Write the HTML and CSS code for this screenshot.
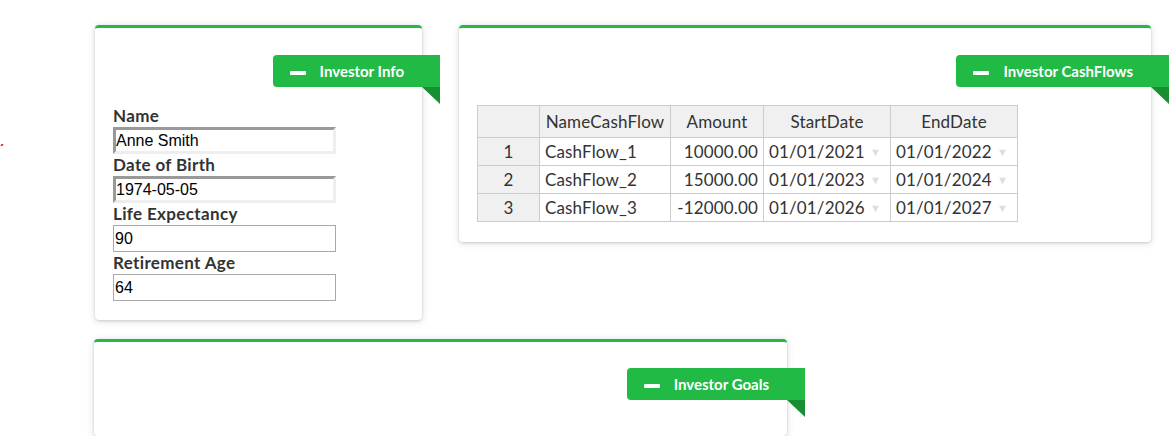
FILE: index.html
```html
<!DOCTYPE html>
<html>
<head>
<meta charset="utf-8">
<link rel="stylesheet" href="styles.css">
</head>
<body>
<span class="stray"></span>
<div class="page">
  <div class="top-row">
    <section class="card card-info">
      <div class="ribbon-row"><div class="ribbon"><span class="minus"></span><span class="ribbon-text">Investor Info</span></div></div>
      <form class="form">
        <label class="lbl">Name</label>
        <input class="inp inset" type="text" value="Anne Smith">
        <label class="lbl">Date of Birth</label>
        <input class="inp inset" type="text" value="1974-05-05">
        <label class="lbl">Life Expectancy</label>
        <input class="inp plain" type="text" value="90">
        <label class="lbl">Retirement Age</label>
        <input class="inp plain" type="text" value="64">
      </form>
    </section>
    <section class="card card-cash">
      <div class="ribbon-row"><div class="ribbon"><span class="minus"></span><span class="ribbon-text">Investor CashFlows</span></div></div>
      <table class="grid">
        <colgroup><col class="c0"><col class="c1"><col class="c2"><col class="c3"><col class="c4"></colgroup>
        <thead>
          <tr><th></th><th>NameCashFlow</th><th>Amount</th><th>StartDate</th><th>EndDate</th></tr>
        </thead>
        <tbody>
          <tr><th>1</th><td>CashFlow_1</td><td class="num">10000.00</td><td class="date">01/01/2021<span class="arrow">▼</span></td><td class="date">01/01/2022<span class="arrow">▼</span></td></tr>
          <tr><th>2</th><td>CashFlow_2</td><td class="num">15000.00</td><td class="date">01/01/2023<span class="arrow">▼</span></td><td class="date">01/01/2024<span class="arrow">▼</span></td></tr>
          <tr><th>3</th><td>CashFlow_3</td><td class="num">-12000.00</td><td class="date">01/01/2026<span class="arrow">▼</span></td><td class="date">01/01/2027<span class="arrow">▼</span></td></tr>
        </tbody>
      </table>
    </section>
  </div>
  <section class="card card-goals">
    <div class="ribbon-row"><div class="ribbon"><span class="minus"></span><span class="ribbon-text">Investor Goals</span></div></div>
  </section>
</div>
</body>
</html>
```

FILE: styles.css
```css
html, body {
  margin: 0;
  padding: 0;
  background: #ffffff;
  font-family: Lato, "Helvetica Neue", Arial, sans-serif;
  color: rgba(0, 0, 0, 0.87);
}

.stray {
  position: absolute;
  left: 1px;
  top: 144px;
  width: 2px;
  height: 2px;
  background: #e8201c;
  transform: skewX(-30deg);
}

.page {
  padding: 25px 0 0 95px;
}

.top-row {
  display: flex;
  align-items: flex-start;
  gap: 37px;
}

.card {
  box-sizing: border-box;
  background: #fff;
  border-top: 3px solid #21ba45;
  border-radius: 4px;
  box-shadow: 0 1px 3px 0 rgba(34, 36, 38, 0.18), 0 1px 8px 0 rgba(34, 36, 38, 0.12);
  padding: 27px 0 0 18px;
}

.card-info {
  width: 327px;
  height: 295px;
}

.card-cash {
  width: 692px;
  height: 217px;
}

.card-goals {
  margin-top: 19px;
  margin-left: -1px;
  width: 693px;
  height: 97px;
  padding-top: 26px;
}

.ribbon-row {
  display: flex;
  justify-content: flex-end;
  margin-right: -18px;
}

.ribbon {
  position: relative;
  display: flex;
  align-items: center;
  height: 32px;
  padding: 0 36px 0 17px;
  background: #21ba45;
  border-radius: 4px 0 0 4px;
  color: #fff;
  font-weight: 700;
  font-size: 15px;
}

.ribbon::after {
  content: "";
  position: absolute;
  right: 0;
  top: 100%;
  border-style: solid;
  border-width: 0 18px 17px 0;
  border-color: transparent #198f35 transparent transparent;
}

.minus {
  display: block;
  width: 16px;
  height: 4px;
  margin-top: 3px;
  border-radius: 1px;
  background: #fff;
  margin-right: 14px;
}

.ribbon-text {
  letter-spacing: 0;
}

.form {
  display: flex;
  flex-direction: column;
  margin-top: 18px;
}

.lbl {
  display: block;
  font-size: 17px;
  font-weight: 700;
  line-height: 22px;
  letter-spacing: 0.35px;
  color: #333;
}

.inp {
  box-sizing: border-box;
  width: 223px;
  height: 27px;
  margin: 0;
  padding: 1px 1px;
  font-family: "Liberation Sans", Arial, sans-serif;
  font-size: 16px;
  color: #000;
  background: #fff;
  outline: none;
}

.inset {
  border-width: 3px;
  border-style: solid;
  border-color: #999 #eeeeee #eeeeee #999;
  padding-left: 0;
}

.plain {
  border: 1px solid #a9a9a9;
}

.grid {
  margin-top: 18px;
  width: 541px;
  border-collapse: collapse;
  table-layout: fixed;
  font-family: Lato, sans-serif;
  font-size: 17px;
  letter-spacing: 0.15px;
  color: #333;
}

.c0 { width: 62px; }
.c1 { width: 131px; }
.c2 { width: 93px; }
.c3 { width: 127px; }
.c4 { width: 127px; }

.grid th, .grid td {
  border: 1px solid #ccc;
  padding: 0 5px;
  height: 27px;
  white-space: nowrap;
  overflow: hidden;
}

.grid th {
  background: #f0f0f0;
  font-weight: 400;
  text-align: center;
}

.grid thead th {
  height: 31px;
}

.grid td {
  text-align: left;
  background: #fff;
}

.grid td.num {
  text-align: right;
  padding-right: 5px;
}

.grid td.date {
  position: relative;
  padding-left: 5px;
}

.arrow {
  position: absolute;
  right: 9px;
  top: 7px;
  font-size: 11px;
  letter-spacing: 0;
  color: #dddddd;
}
```
